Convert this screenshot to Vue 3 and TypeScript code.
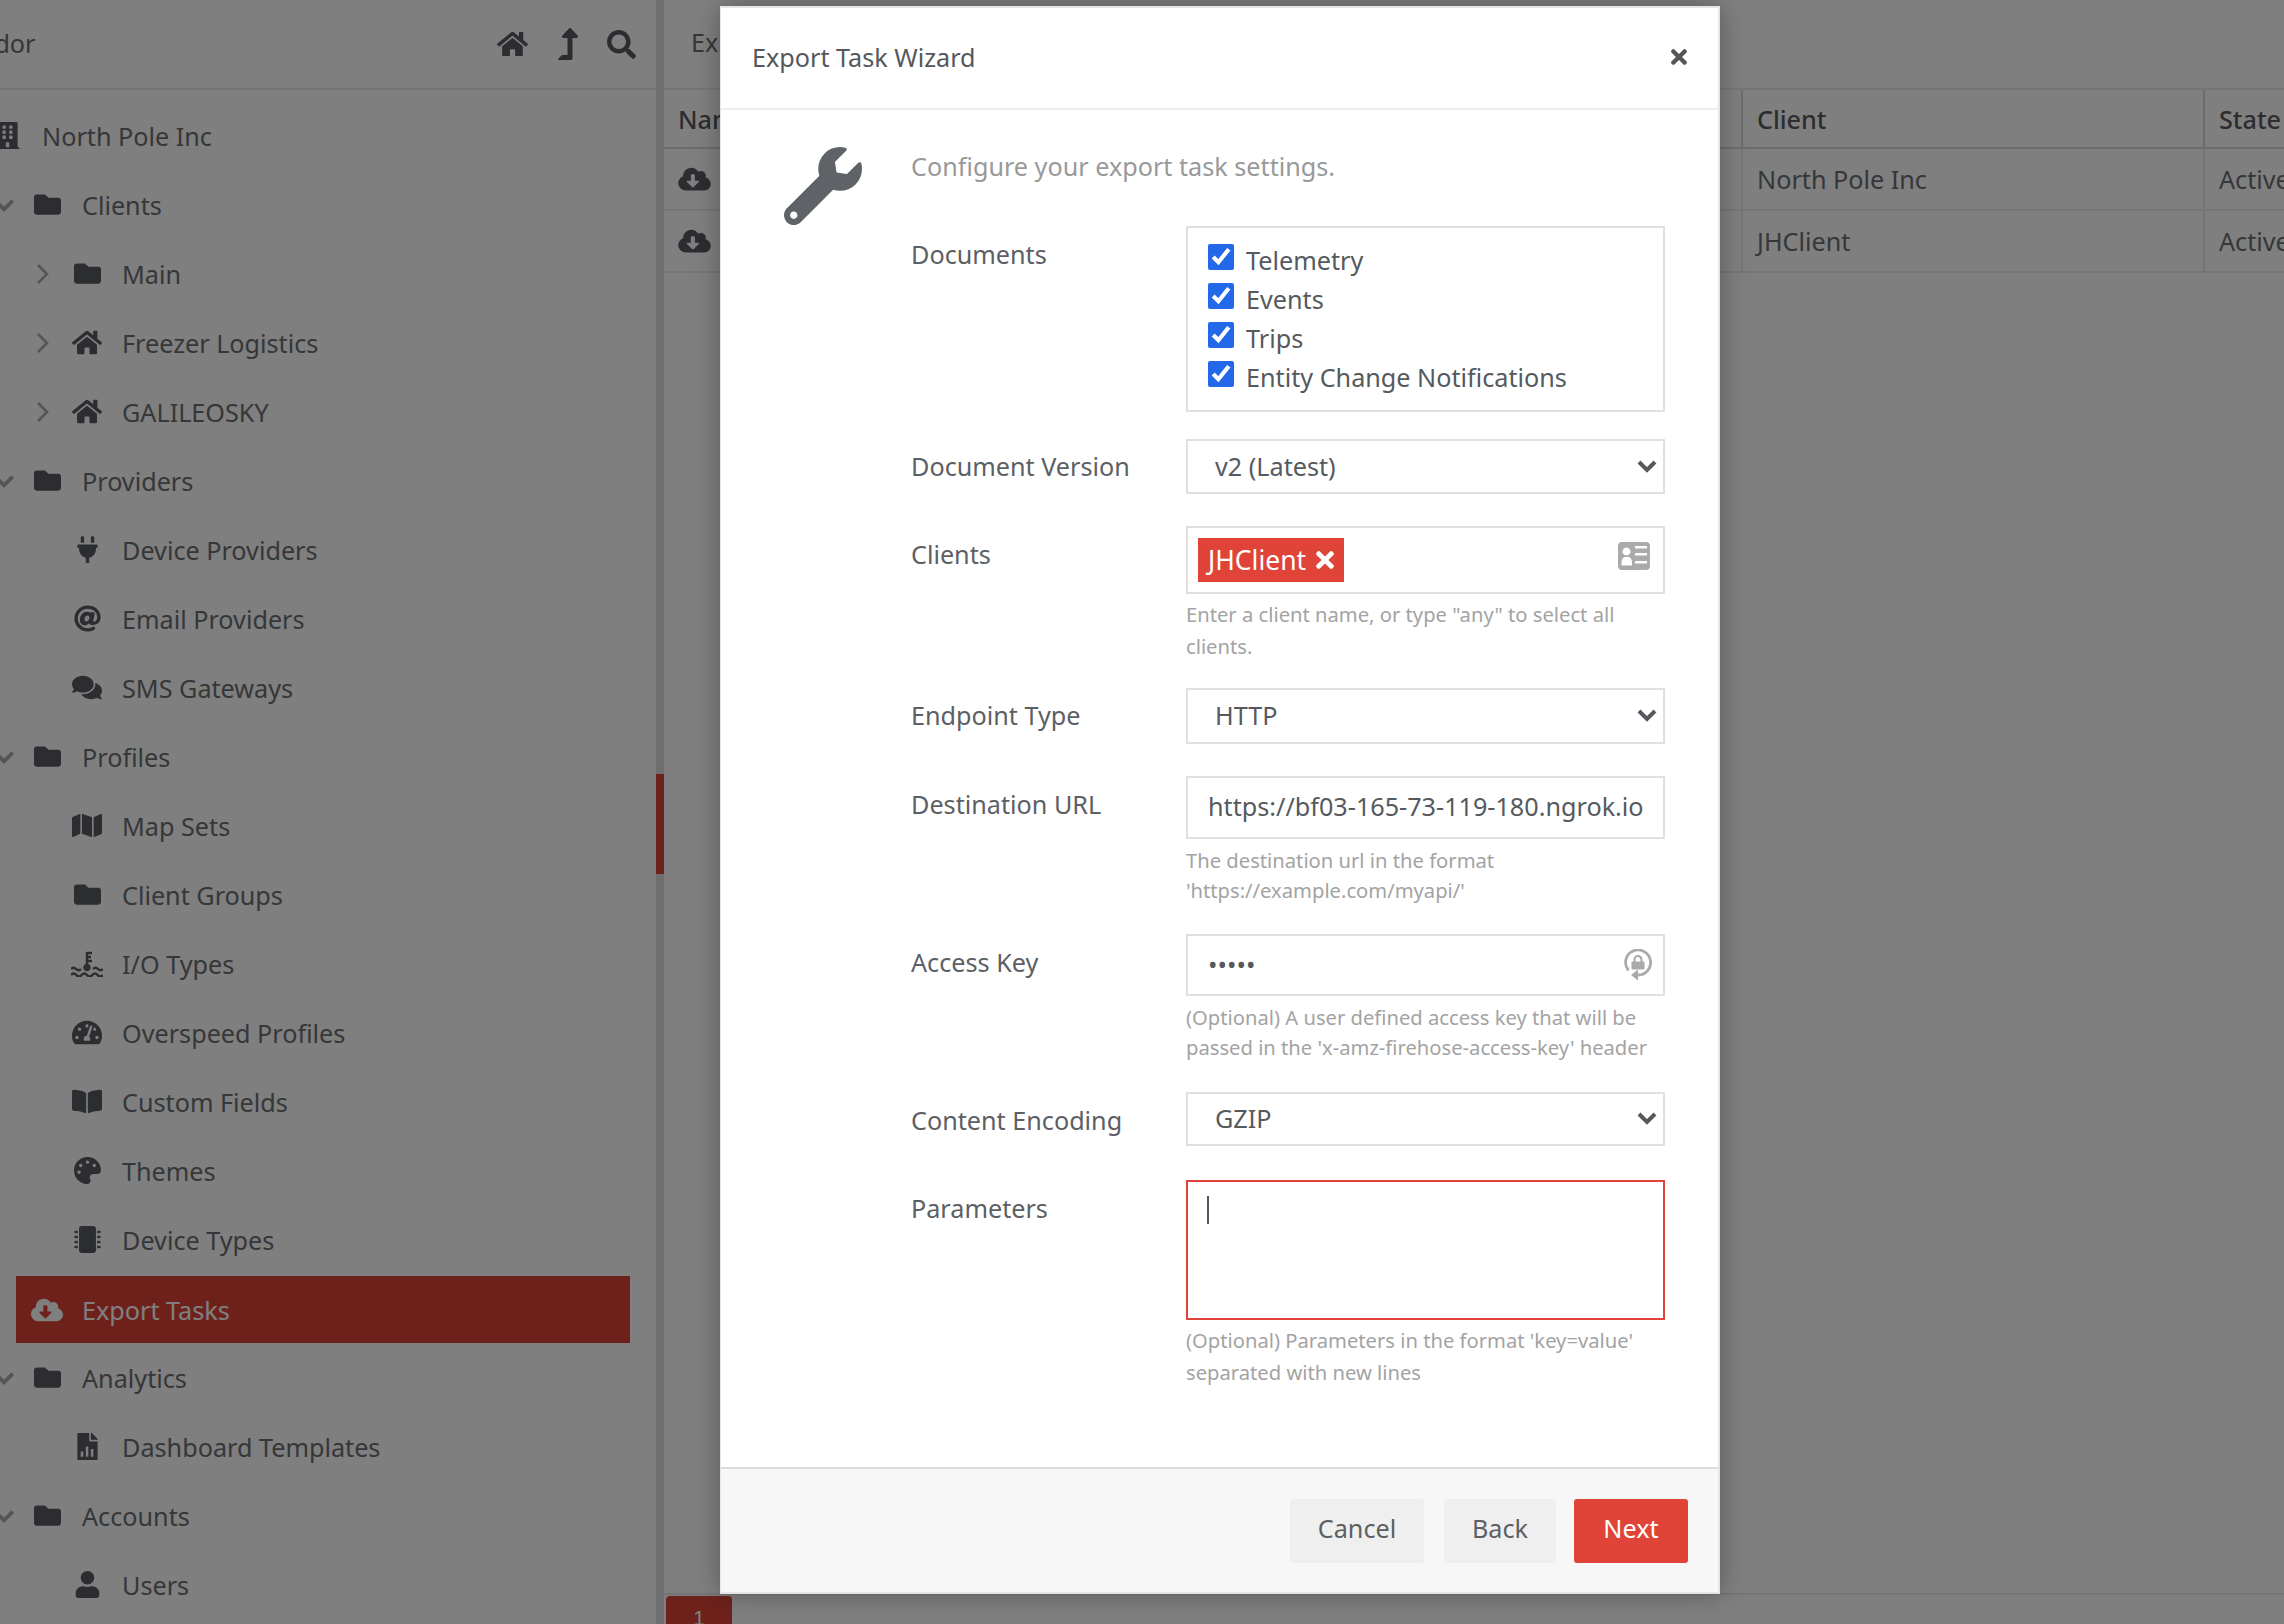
<script setup lang="ts">
interface Row { label: string; icon: string; lv: number; caret?: 'down' | 'right'; active?: boolean }

const P: Record<string, { vb: string; d: string }> = {
  home: { vb: '0 0 576 512', d: 'M280.37 148.26L96 300.11V464a16 16 0 0 0 16 16l112.06-.29a16 16 0 0 0 15.92-16V368a16 16 0 0 1 16-16h64a16 16 0 0 1 16 16v95.64a16 16 0 0 0 16 16.05L464 480a16 16 0 0 0 16-16V300L295.67 148.26a12.19 12.19 0 0 0-15.3 0zM571.6 251.47L488 182.56V44.05a12 12 0 0 0-12-12h-56a12 12 0 0 0-12 12v72.61L318.47 43a48 48 0 0 0-61 0L4.34 251.47a12 12 0 0 0-1.6 16.9l25.5 31A12 12 0 0 0 45.15 301l235.22-193.74a12.19 12.19 0 0 1 15.3 0L530.9 301a12 12 0 0 0 16.9-1.6l25.5-31a12 12 0 0 0-1.7-16.93z' },
  search: { vb: '0 0 512 512', d: 'M505 442.7L405.3 343c-4.5-4.5-10.6-7-17-7H372c27.6-35.3 44-79.7 44-128C416 93.1 322.9 0 208 0S0 93.1 0 208s93.1 208 208 208c48.3 0 92.7-16.4 128-44v16.3c0 6.4 2.5 12.5 7 17l99.7 99.7c9.4 9.4 24.6 9.4 33.9 0l28.3-28.3c9.4-9.4 9.4-24.6.1-34zM208 336c-70.7 0-128-57.2-128-128 0-70.7 57.2-128 128-128 70.7 0 128 57.2 128 128 0 70.7-57.2 128-128 128z' },
  up: { vb: '0 0 320 512', d: 'M313.553 119.669L209.587 7.666c-9.485-10.214-25.676-10.229-35.174 0L70.438 119.669C56.232 134.969 67.062 160 88.025 160H152v272H68.024a11.996 11.996 0 0 0-8.485 3.515l-56 56C-4.021 499.074 1.333 512 12.024 512H208c13.255 0 24-10.745 24-24V160h64c20.878 0 31.851-24.969 17.553-40.331z' },
  folder: { vb: '0 0 512 512', d: 'M464 128H272l-64-64H48C21.49 64 0 85.49 0 112v288c0 26.51 21.49 48 48 48h416c26.51 0 48-21.49 48-48V176c0-26.51-21.49-48-48-48z' },
  cloud: { vb: '0 0 640 512', d: 'M537.6 226.6c4.1-10.7 6.4-22.4 6.4-34.6 0-53-43-96-96-96-19.7 0-38.1 6-53.3 16.2C367 64.2 315.3 32 256 32c-88.4 0-160 71.6-160 160 0 2.7.1 5.4.2 8.1C40.2 219.8 0 273.2 0 336c0 79.5 64.5 144 144 144h368c70.7 0 128-57.3 128-128 0-61.9-44-113.6-102.4-125.4zm-132.9 88.7L299.3 420.7c-6.2 6.2-16.4 6.2-22.6 0L171.3 315.3c-10.1-10.1-2.9-27.3 11.3-27.3H248V176c0-8.8 7.2-16 16-16h48c8.8 0 16 7.2 16 16v112h65.4c14.2 0 21.4 17.2 11.3 27.3z' },
  building: { vb: '0 0 448 512', d: 'M436 480h-20V24c0-13.255-10.745-24-24-24H56C42.745 0 32 10.745 32 24v456H12c-6.627 0-12 5.373-12 12v20h448v-20c0-6.627-5.373-12-12-12zM128 76c0-6.627 5.373-12 12-12h40c6.627 0 12 5.373 12 12v40c0 6.627-5.373 12-12 12h-40c-6.627 0-12-5.373-12-12V76zm0 96c0-6.627 5.373-12 12-12h40c6.627 0 12 5.373 12 12v40c0 6.627-5.373 12-12 12h-40c-6.627 0-12-5.373-12-12v-40zm52 148h-40c-6.627 0-12-5.373-12-12v-40c0-6.627 5.373-12 12-12h40c6.627 0 12 5.373 12 12v40c0 6.627-5.373 12-12 12zm76 160h-64v-84c0-6.627 5.373-12 12-12h40c6.627 0 12 5.373 12 12v84zm64-172c0 6.627-5.373 12-12 12h-40c-6.627 0-12-5.373-12-12v-40c0-6.627 5.373-12 12-12h40c6.627 0 12 5.373 12 12v40zm0-96c0 6.627-5.373 12-12 12h-40c-6.627 0-12-5.373-12-12v-40c0-6.627 5.373-12 12-12h40c6.627 0 12 5.373 12 12v40zm0-96c0 6.627-5.373 12-12 12h-40c-6.627 0-12-5.373-12-12V76c0-6.627 5.373-12 12-12h40c6.627 0 12 5.373 12 12v40z' },
  plug: { vb: '0 0 384 512', d: 'M320,32a32,32,0,0,0-64,0v96h64Zm48,128H16A16,16,0,0,0,0,176v32a16,16,0,0,0,16,16H32v32A160.07,160.07,0,0,0,160,412.8V512h64V412.8A160.07,160.07,0,0,0,352,256V224h16a16,16,0,0,0,16-16V176A16,16,0,0,0,368,160ZM128,32a32,32,0,0,0-64,0v96h64Z' },
  at: { vb: '0 0 512 512', d: 'M256 8C118.941 8 8 118.919 8 256c0 137.059 110.919 248 248 248 48.154 0 95.342-14.14 135.408-40.223 12.005-7.815 14.625-24.288 5.552-35.372l-10.177-12.433c-7.671-9.371-21.179-11.667-31.373-5.129C325.92 429.757 291.314 440 256 440c-101.458 0-184-82.542-184-184S154.542 72 256 72c100.139 0 184 57.619 184 160 0 38.786-21.093 79.742-58.17 83.693-17.349-.454-16.91-12.857-13.476-30.024l23.433-121.11C394.653 149.75 383.308 136 368.225 136h-44.981a13.518 13.518 0 0 0-13.432 11.993l-.01.092c-14.697-17.901-40.448-21.775-59.971-21.775-74.58 0-137.831 62.234-137.831 151.46 0 65.303 36.785 105.87 96 105.87 26.984 0 57.369-15.637 74.991-38.333 9.522 34.104 40.613 34.103 70.71 34.103C462.609 379.41 504 307.798 504 232 504 95.653 394.023 8 256 8zm-21.68 304.43c-22.249 0-36.07-15.623-36.07-40.771 0-44.993 30.779-72.729 58.63-72.729 22.292 0 35.601 15.241 35.601 40.77 0 45.061-33.875 72.73-58.161 72.73z' },
  comments: { vb: '0 0 576 512', d: 'M416 192c0-88.4-93.1-160-208-160S0 103.6 0 192c0 34.3 14.1 65.9 38 92-13.4 30.2-35.5 54.2-35.8 54.5-2.2 2.3-2.8 5.7-1.5 8.7S4.8 352 8 352c36.6 0 66.9-12.3 88.7-25 32.2 15.7 70.3 25 111.3 25 114.9 0 208-71.6 208-160zm122 220c23.9-26 38-57.7 38-92 0-66.9-53.5-124.2-129.3-148.1.9 6.6 1.3 13.3 1.3 20.1 0 105.9-107.7 192-240 192-10.8 0-21.3-.8-31.7-1.9C207.8 439.6 281.8 480 368 480c41 0 79.1-9.2 111.3-25 21.8 12.7 52.1 25 88.7 25 3.2 0 6.1-1.9 7.3-4.8 1.3-2.9.7-6.3-1.5-8.7-.3-.3-22.4-24.2-35.8-54.5z' },
  map: { vb: '0 0 576 512', d: 'M0 117.66v346.32c0 11.32 11.43 19.06 21.94 14.86L160 416V32L20.12 87.95A32.006 32.006 0 0 0 0 117.66zM192 416l192 64V96L192 32v384zM554.06 33.16L416 96v384l139.88-55.95A31.996 31.996 0 0 0 576 394.34V48.02c0-11.32-11.43-19.06-21.94-14.86z' },
  io: { vb: '0 0 32 26', d: 'M16 1V13M16 2h5M16 6h4M16 10h5M16 14a2.5 2.5 0 1 0 .01 0M16 15.5a1 1 0 1 0 .01 0M0 18q2.5-2.5 5 0t5 0M22 18q2.5-2.5 5 0t5 0M0 24q2.67-3 5.33 0t5.33 0t5.33 0t5.33 0t5.33 0t5.33 0' },
  gauge: { vb: '0 0 576 512', d: 'M288 32C128.94 32 0 160.94 0 320c0 52.8 14.25 102.26 39.06 144.8 5.61 9.62 16.3 15.2 27.44 15.2h443c11.14 0 21.83-5.58 27.44-15.2C561.75 422.26 576 372.8 576 320c0-159.06-128.94-288-288-288zm0 64c14.71 0 26.58 10.13 30.32 23.65-1.11 2.26-2.64 4.23-3.45 6.67l-9.22 27.67c-5.13 3.49-10.97 6.01-17.64 6.01-17.67 0-32-14.33-32-32S270.33 96 288 96zM96 384c-17.67 0-32-14.33-32-32s14.33-32 32-32 32 14.33 32 32-14.33 32-32 32zm48-160c-17.67 0-32-14.33-32-32s14.33-32 32-32 32 14.33 32 32-14.33 32-32 32zm246.77-72.41l-61.33 184C343.13 347.33 352 364.54 352 384c0 11.72-3.38 22.55-8.88 32H232.88c-5.5-9.45-8.88-20.28-8.88-32 0-33.94 26.5-61.43 59.9-63.59l61.34-184.01c4.17-12.56 17.73-19.45 30.36-15.17 12.57 4.19 19.35 17.79 15.17 30.36zm14.66 57.2l15.52-46.55c3.47-1.29 7.13-2.23 11.05-2.23 17.67 0 32 14.33 32 32s-14.33 32-32 32c-11.38-.01-20.89-6.28-26.57-15.22zM480 384c-17.67 0-32-14.33-32-32s14.33-32 32-32 32 14.33 32 32-14.33 32-32 32z' },
  book: { vb: '0 0 576 512', d: 'M542.22 32.05c-54.8 3.11-163.72 14.43-230.96 55.59-4.64 2.84-7.27 7.89-7.27 13.17v363.87c0 11.55 12.63 18.85 23.28 13.49 69.18-34.82 169.23-44.32 218.7-46.92 16.89-.89 30.02-14.43 30.02-30.66V62.75c.01-17.71-15.35-31.74-33.77-30.7zM264.73 87.64C197.5 46.48 88.58 35.17 33.78 32.05 15.36 31.01 0 45.04 0 62.75V400.6c0 16.24 13.13 29.78 30.02 30.66 49.49 2.6 149.59 12.11 218.77 46.95 10.62 5.35 23.21-1.94 23.21-13.46V100.63c0-5.29-2.62-10.14-7.27-12.99z' },
  palette: { vb: '0 0 512 512', d: 'M204.3 5C104.9 24.4 24.8 104.3 5.2 203.4c-37 187 131.7 326.4 258.8 306.7 41.2-6.4 61.4-54.6 42.5-91.7-23.1-45.4 9.9-98.4 60.9-98.4h79.7c35.8 0 64.8-29.6 64.9-65.3C511.5 97.1 368.1-26.9 204.3 5zM96 320c-17.7 0-32-14.3-32-32s14.3-32 32-32 32 14.3 32 32-14.3 32-32 32zm32-128c-17.7 0-32-14.3-32-32s14.3-32 32-32 32 14.3 32 32-14.3 32-32 32zm128-64c-17.7 0-32-14.3-32-32s14.3-32 32-32 32 14.3 32 32-14.3 32-32 32zm128 64c-17.7 0-32-14.3-32-32s14.3-32 32-32 32 14.3 32 32-14.3 32-32 32z' },
  chip: { vb: '0 0 512 512', d: 'M416 48v416c0 26.51-21.49 48-48 48H144c-26.51 0-48-21.49-48-48V48c0-26.51 21.49-48 48-48h224c26.51 0 48 21.49 48 48zm96 58v12a6 6 0 0 1-6 6h-18v6a6 6 0 0 1-6 6h-42V88h42a6 6 0 0 1 6 6v6h18a6 6 0 0 1 6 6zm0 96v12a6 6 0 0 1-6 6h-18v6a6 6 0 0 1-6 6h-42v-48h42a6 6 0 0 1 6 6v6h18a6 6 0 0 1 6 6zm0 96v12a6 6 0 0 1-6 6h-18v6a6 6 0 0 1-6 6h-42v-48h42a6 6 0 0 1 6 6v6h18a6 6 0 0 1 6 6zm0 96v12a6 6 0 0 1-6 6h-18v6a6 6 0 0 1-6 6h-42v-48h42a6 6 0 0 1 6 6v6h18a6 6 0 0 1 6 6zM30 376h42v48H30a6 6 0 0 1-6-6v-6H6a6 6 0 0 1-6-6v-12a6 6 0 0 1 6-6h18v-6a6 6 0 0 1 6-6zm0-96h42v48H30a6 6 0 0 1-6-6v-6H6a6 6 0 0 1-6-6v-12a6 6 0 0 1 6-6h18v-6a6 6 0 0 1 6-6zm0-96h42v48H30a6 6 0 0 1-6-6v-6H6a6 6 0 0 1-6-6v-12a6 6 0 0 1 6-6h18v-6a6 6 0 0 1 6-6zm0-96h42v48H30a6 6 0 0 1-6-6v-6H6a6 6 0 0 1-6-6v-12a6 6 0 0 1 6-6h18v-6a6 6 0 0 1 6-6z' },
  filechart: { vb: '0 0 384 512', d: 'M224 136V0H24C10.7 0 0 10.7 0 24v464c0 13.3 10.7 24 24 24h336c13.3 0 24-10.7 24-24V160H248c-13.2 0-24-10.8-24-24zm160-14.1v6.1H256V0h6.1c6.4 0 12.5 2.5 17 7l97.9 98c4.5 4.5 7 10.6 7 16.9zM64 352h48v96H64zM160 256h48v192h-48zM256 304h48v144h-48z' },
  user: { vb: '0 0 448 512', d: 'M224 256c70.7 0 128-57.3 128-128S294.7 0 224 0 96 57.3 96 128s57.3 128 128 128zm89.6 32h-16.7c-22.2 10.2-46.9 16-72.9 16s-50.6-5.8-72.9-16h-16.7C60.2 288 0 348.2 0 422.4V464c0 26.5 21.5 48 48 48h352c26.5 0 48-21.5 48-48v-41.6c0-74.2-60.2-134.4-134.4-134.4z' },
  wrench: { vb: '0 0 512 512', d: 'M507.73 109.1c-2.24-9.03-13.54-12.09-20.12-5.51l-74.36 74.36-67.88-11.31-11.31-67.88 74.36-74.36c6.62-6.62 3.43-17.9-5.66-20.16-47.38-11.74-99.55.91-136.58 37.93-39.64 39.64-50.55 97.1-34.05 147.2L18.74 402.76c-24.99 24.99-24.99 65.51 0 90.5 24.99 24.99 65.51 24.99 90.5 0l213.21-213.21c50.12 16.71 107.47 5.68 147.37-34.22 37.07-37.07 49.7-89.32 37.91-136.73zM64 472c-13.25 0-24-10.75-24-24 0-13.26 10.75-24 24-24s24 10.74 24 24c0 13.25-10.75 24-24 24z' },
  times: { vb: '0 0 352 512', d: 'M242.72 256l100.07-100.07c12.28-12.28 12.28-32.19 0-44.48l-22.24-22.24c-12.28-12.28-32.19-12.28-44.48 0L176 189.28 75.93 89.21c-12.28-12.28-32.19-12.28-44.48 0L9.21 111.45c-12.28 12.28-12.28 32.19 0 44.48L109.28 256 9.21 356.07c-12.28 12.28-12.28 32.19 0 44.48l22.24 22.24c12.28 12.28 32.2 12.28 44.48 0L176 322.72l100.07 100.07c12.28 12.28 32.2 12.28 44.48 0l22.24-22.24c12.28-12.28 12.28-32.19 0-44.48L242.72 256z' },
  card: { vb: '0 0 32 28', d: 'M4 0H28a4 4 0 0 1 4 4V24a4 4 0 0 1-4 4H4a4 4 0 0 1-4-4V4a4 4 0 0 1 4-4zM8.5 5.5a4 4 0 1 0 .01 0zM3.5 23.5h10.5v-3.5c0-3-2-5-3.5-5h-3.5c-1.5 0-3.5 2-3.5 5zM17 4v2.6h12V4zM17 11v2.6h12V11zM17 19v2.6h12V19z' },
}

const rows: Row[] = [
  { label: 'North Pole Inc', icon: 'building', lv: 0 },
  { label: 'Clients', icon: 'folder', lv: 1, caret: 'down' },
  { label: 'Main', icon: 'folder', lv: 2, caret: 'right' },
  { label: 'Freezer Logistics', icon: 'home', lv: 2, caret: 'right' },
  { label: 'GALILEOSKY', icon: 'home', lv: 2, caret: 'right' },
  { label: 'Providers', icon: 'folder', lv: 1, caret: 'down' },
  { label: 'Device Providers', icon: 'plug', lv: 2 },
  { label: 'Email Providers', icon: 'at', lv: 2 },
  { label: 'SMS Gateways', icon: 'comments', lv: 2 },
  { label: 'Profiles', icon: 'folder', lv: 1, caret: 'down' },
  { label: 'Map Sets', icon: 'map', lv: 2 },
  { label: 'Client Groups', icon: 'folder', lv: 2 },
  { label: 'I/O Types', icon: 'io', lv: 2 },
  { label: 'Overspeed Profiles', icon: 'gauge', lv: 2 },
  { label: 'Custom Fields', icon: 'book', lv: 2 },
  { label: 'Themes', icon: 'palette', lv: 2 },
  { label: 'Device Types', icon: 'chip', lv: 2 },
  { label: 'Export Tasks', icon: 'cloud', lv: 1, active: true },
  { label: 'Analytics', icon: 'folder', lv: 1, caret: 'down' },
  { label: 'Dashboard Templates', icon: 'filechart', lv: 2 },
  { label: 'Accounts', icon: 'folder', lv: 1, caret: 'down' },
  { label: 'Users', icon: 'user', lv: 2 },
]

const docs = ['Telemetry', 'Events', 'Trips', 'Entity Change Notifications']
const tableRows = [
  { client: 'North Pole Inc', state: 'Active' },
  { client: 'JHClient', state: 'Active' },
]
</script>

<template>
  <div class="page">
    <aside class="side">
      <div class="side-main">
        <header class="side-head">
          <span class="side-title">Vendor</span>
          <svg class="hd-home" :viewBox="P.home.vb"><path :d="P.home.d" /></svg>
          <svg class="hd-up" :viewBox="P.up.vb"><path :d="P.up.d" /></svg>
          <svg class="hd-search" :viewBox="P.search.vb"><path :d="P.search.d" /></svg>
        </header>
        <nav class="tree">
          <div v-for="r in rows" :key="r.label" class="row" :class="['lv' + r.lv, { active: r.active }]">
            <span v-if="!r.active" class="caret">
              <svg v-if="r.caret === 'down'" class="c-down" viewBox="0 0 20 14"><path d="M2 3l8 8 8-8" /></svg>
              <svg v-if="r.caret === 'right'" class="c-right" viewBox="0 0 14 22"><path d="M3 2l9 9-9 9" /></svg>
            </span>
            <span class="ico">
              <svg :class="'i-' + r.icon" :viewBox="P[r.icon].vb"><path :d="P[r.icon].d" fill-rule="evenodd" /></svg>
            </span>
            <span class="lbl">{{ r.label }}</span>
          </div>
        </nav>
      </div>
      <div class="track"><div class="thumb"></div></div>
    </aside>

    <main class="main">
      <div class="main-head">Export Tasks</div>
      <div class="table">
        <div class="tr th">
          <div class="td">Name</div>
          <div class="td">Client</div>
          <div class="td">State</div>
        </div>
        <div v-for="t in tableRows" :key="t.client" class="tr">
          <div class="td"><svg class="cloud" :viewBox="P.cloud.vb"><path :d="P.cloud.d" /></svg></div>
          <div class="td">{{ t.client }}</div>
          <div class="td">{{ t.state }}</div>
        </div>
      </div>
      <div class="pager"><span class="page-btn">1</span></div>
    </main>

    <div class="overlay"></div>

    <section class="modal">
      <header class="m-head">
        <span class="m-title">Export Task Wizard</span>
        <svg class="m-close" :viewBox="P.times.vb"><path :d="P.times.d" /></svg>
      </header>
      <div class="m-body">
        <svg class="wrench" :viewBox="P.wrench.vb"><path :d="P.wrench.d" /></svg>
        <div class="form">
          <p class="desc">Configure your export task settings.</p>

          <div class="field f-docs">
            <label class="lab">Documents</label>
            <div class="ctl docs">
              <label v-for="d in docs" :key="d" class="chk">
                <input type="checkbox" checked />
                <span>{{ d }}</span>
              </label>
            </div>
          </div>

          <div class="field f-ver">
            <label class="lab lab-mid">Document Version</label>
            <div class="ctl sel-wrap h-ver">
              <select class="sel"><option>v2 (Latest)</option></select>
              <svg class="chev" viewBox="0 0 20 14"><path d="M2 3l8 8 8-8" /></svg>
            </div>
          </div>

          <div class="field f-cli">
            <label class="lab">Clients</label>
            <div class="col">
              <div class="ctl tags">
                <span class="tag">JHClient<svg class="tag-x" :viewBox="P.times.vb"><path :d="P.times.d" /></svg></span>
                <svg class="card" :viewBox="P.card.vb"><path :d="P.card.d" fill-rule="evenodd" /></svg>
              </div>
              <p class="help h32">Enter a client name, or type "any" to select all clients.</p>
            </div>
          </div>

          <div class="field f-end">
            <label class="lab lab-mid">Endpoint Type</label>
            <div class="ctl sel-wrap h-end">
              <select class="sel"><option>HTTP</option></select>
              <svg class="chev" viewBox="0 0 20 14"><path d="M2 3l8 8 8-8" /></svg>
            </div>
          </div>

          <div class="field f-dest">
            <label class="lab">Destination URL</label>
            <div class="col">
              <input class="ctl txt h-dest" type="text" value="https://bf03-165-73-119-180.ngrok.io/" />
              <p class="help h30">The destination url in the format<br />'https://example.com/myapi/'</p>
            </div>
          </div>

          <div class="field f-key">
            <label class="lab">Access Key</label>
            <div class="col">
              <div class="pw">
                <input class="ctl txt h-key" type="password" value="12345" />
                <svg class="lockrot" viewBox="0 0 28 33">
                  <path class="arc" d="M4.5 21.5A12.5 12.5 0 1 1 14 26" />
                  <path class="solid" d="M14 20.5v11L7 26z" />
                  <path class="solid" d="M8.5 12.5h11a1 1 0 0 1 1 1v6a1 1 0 0 1-1 1h-11a1 1 0 0 1-1-1v-6a1 1 0 0 1 1-1z" />
                  <path class="shack" d="M10.5 13v-2.5a3.5 3.5 0 0 1 7 0V13" />
                </svg>
              </div>
              <p class="help h30">(Optional) A user defined access key that will be<br />passed in the 'x-amz-firehose-access-key' header</p>
            </div>
          </div>

          <div class="field f-enc">
            <label class="lab">Content Encoding</label>
            <div class="ctl sel-wrap h-enc">
              <select class="sel"><option>GZIP</option></select>
              <svg class="chev" viewBox="0 0 20 14"><path d="M2 3l8 8 8-8" /></svg>
            </div>
          </div>

          <div class="field">
            <label class="lab">Parameters</label>
            <div class="col">
              <div class="ta-wrap">
                <textarea class="ctl ta"></textarea>
                <span class="cursor"></span>
              </div>
              <p class="help h32">(Optional) Parameters in the format 'key=value'<br />separated with new lines</p>
            </div>
          </div>
        </div>
      </div>
      <footer class="m-foot">
        <button class="btn b-cancel">Cancel</button>
        <button class="btn b-back">Back</button>
        <button class="btn b-next">Next</button>
      </footer>
    </section>
  </div>
</template>

<style>
html, body { margin: 0; padding: 0; }
</style>

<style scoped>
.page {
  position: relative;
  display: flex;
  width: 2284px;
  height: 1624px;
  overflow: hidden;
  background: #fff;
  font-family: "Noto Sans", "Open Sans", sans-serif;
  font-size: 25.2px;
  color: #6b6e72;
}
.side { display: flex; width: 664px; height: 100%; flex: none; }
.side-main { width: 656px; overflow: hidden; }
.side-head {
  display: flex;
  align-items: center;
  height: 88px;
  box-sizing: content-box;
  border-bottom: 2px solid #eaeaea;
  color: #6b6e72;
}
.side-title { margin-left: -50px; margin-right: auto; padding-bottom: 2px; }
.side-head svg { fill: #585a60; display: block; }
.hd-home { width: 31px; height: 28px; margin-right: 30px; }
.hd-up { width: 20px; height: 32px; margin-right: 29px; }
.hd-search { width: 29px; height: 29px; margin-right: 20px; }
.tree { margin-left: -39px; padding-top: 11px; }
.row {
  display: flex;
  align-items: center;
  height: 69px;
  box-sizing: border-box;
}
.lv1 { padding-left: 40px; }
.lv2 { padding-left: 80px; }
.caret { width: 28px; flex: none; display: flex; align-items: center; }
.c-down { width: 22px; height: 16px; margin-left: -8px; fill: none; stroke: #aaa; stroke-width: 3.4; flex: none; }
.c-right { width: 14px; height: 22px; margin-left: -6px; fill: none; stroke: #aaa; stroke-width: 2.6; flex: none; }
.ico { width: 36px; flex: none; display: flex; justify-content: center; align-items: center; }
.ico svg { fill: #585a60; display: block; width: 27px; height: 27px; }
.ico .i-home, .ico .i-comments, .ico .i-map, .ico .i-gauge, .ico .i-book { width: 30px; height: 27px; }
.ico .i-io { width: 32px; height: 26px; }
.ico .i-io path { fill: none; stroke: #585a60; stroke-width: 2.4; }
.ico .i-cloud { width: 32px; height: 26px; }
.lbl { margin-left: 17px; white-space: nowrap; }
.row.active {
  height: 67px;
  margin: 2px 26px 0 55px;
  padding-left: 13px;
  background: #dc4236;
  color: #fff;
}
.row.active .ico svg { fill: #fff; }
.track { position: relative; width: 8px; background: #dedede; }
.thumb { position: absolute; top: 774px; left: 0; width: 8px; height: 100px; background: #dc4236; }

.main { flex: 1; display: flex; flex-direction: column; min-width: 0; }
.main-head { height: 88px; line-height: 84px; padding-left: 27px; white-space: nowrap; }
.table { border-top: 2px solid #eaeaea; }
.tr {
  display: grid;
  grid-template-columns: 1077px 462px 1fr;
  height: 62px;
  border-bottom: 2px solid #eaeaea;
  box-sizing: border-box;
}
.tr.th { height: 59px; border-bottom: 2px solid #d8d8d8; font-weight: 500; color: #585a60; }
.td { display: flex; align-items: center; padding-left: 14px; border-left: 2px solid #eaeaea; white-space: nowrap; }
.td:first-child { border-left: 0; }
.th .td { border-left-color: #d8d8d8; }
.cloud { width: 33px; height: 26px; fill: #585a60; }
.pager { margin-top: auto; height: 29px; border-top: 2px solid #eaeaea; }
.page-btn {
  display: block;
  width: 66px;
  height: 40px;
  margin-left: 2px;
  margin-top: 1px;
  box-sizing: border-box;
  padding-top: 10px;
  text-align: center;
  background: #dc4236;
  color: #fff;
  border-radius: 4px 4px 0 0;
  font: 21px "Liberation Sans", sans-serif;
}

.overlay { position: absolute; inset: 0; background: rgba(0, 0, 0, 0.5); }

.modal {
  position: absolute;
  left: 720px;
  top: 6px;
  width: 1000px;
  height: 1588px;
  box-sizing: border-box;
  display: flex;
  flex-direction: column;
  background: #fff;
  border: 2px solid #e6e6e6;
  border-left-width: 1px;
  box-shadow: 0 0 24px rgba(0, 0, 0, 0.3);
  color: #5c6064;
}
.m-head {
  flex: none;
  height: 102px;
  box-sizing: border-box;
  display: flex;
  align-items: center;
  justify-content: space-between;
  padding: 0 31px 3px 31px;
  border-bottom: 2px solid #eee;
}
.m-title { color: #54585c; }
.m-close { width: 16px; height: 24px; fill: #555; }
.m-body { flex: 1; display: flex; min-height: 0; }
.wrench { width: 78px; height: 78px; margin: 37px 0 0 63px; fill: #5f6368; flex: none; }
.form { margin-left: 49px; width: 754px; }
.desc { margin: 37px 0 41px; line-height: 38px; color: #999; }
.field { display: flex; align-items: flex-start; margin-bottom: 28px; }
.lab { width: 275px; flex: none; padding-top: 9px; line-height: 38px; }
.lab-mid { padding-top: 8px; }
.col { width: 479px; display: flex; flex-direction: column; }
.ctl {
  display: block;
  width: 479px;
  box-sizing: border-box;
  border: 2px solid #e0e0e0;
  background: #fff;
  font: inherit;
  color: #555a5e;
  outline: none;
  margin: 0;
}
.f-docs { margin-bottom: 27px; }
.f-ver { margin-bottom: 32px; }
.f-cli { margin-bottom: 26px; }
.f-end { margin-bottom: 32px; }
.f-dest { margin-bottom: 29px; }
.f-key { margin-bottom: 30px; }
.f-enc { margin-bottom: 34px; }
.docs { height: 186px; padding: 13px 20px; display: flex; flex-direction: column; }
.chk { display: flex; align-items: flex-start; height: 39px; line-height: 38px; }
.chk input { width: 26px; height: 26px; margin: 3px 12px 0 0; accent-color: #2268e8; flex: none; }
.sel-wrap { position: relative; }
.h-ver { height: 55px; }
.h-end { height: 56px; }
.h-enc { height: 54px; }
.sel {
  appearance: none;
  width: 100%;
  height: 100%;
  border: 0;
  background: transparent;
  font: inherit;
  color: inherit;
  padding: 0 0 2px 27px;
  outline: none;
  display: block;
}
.chev {
  position: absolute;
  right: 6px;
  top: 50%;
  width: 20px;
  height: 14px;
  margin-top: -8px;
  fill: none;
  stroke: #55585c;
  stroke-width: 4;
}
.tags { position: relative; height: 68px; padding: 10px; }
.tag {
  display: flex;
  align-items: center;
  height: 44px;
  width: 146px;
  box-sizing: border-box;
  padding-left: 10px;
  background: #e04337;
  color: #fff;
  white-space: nowrap;
  font-size: 26.5px;
}
.tag-x { width: 18px; height: 26px; margin-left: auto; margin-right: 10px; fill: #fff; flex: none; }
.card { position: absolute; right: 13px; top: 14px; width: 32px; height: 28px; fill: #aaa; }
.help { margin: 4px 0 0; font-size: 20.2px; color: #a3a3a3; }
.h32 { line-height: 32px; }
.h30 { line-height: 30px; margin-top: 6px; }
.txt { padding: 0 20px 3px; }
.h-dest { height: 63px; }
.h-key { height: 62px; }
.pw { position: relative; }
.lockrot { position: absolute; right: 13px; top: 15px; width: 28px; height: 33px; }
.lockrot .arc { fill: none; stroke: #aaa; stroke-width: 2.8; }
.lockrot .solid { fill: #aaa; }
.lockrot .shack { fill: none; stroke: #aaa; stroke-width: 2; }
.ta-wrap { position: relative; }
.ta { height: 140px; border-color: #e04337; padding: 12px 20px; resize: none; }
.cursor { position: absolute; left: 21px; top: 16px; width: 2px; height: 28px; background: #555; }
.m-foot {
  flex: none;
  height: 125px;
  box-sizing: border-box;
  display: flex;
  justify-content: flex-end;
  align-items: flex-start;
  padding: 30px 30px 0 0;
  background: #f7f7f7;
  border-top: 2px solid #ddd;
}
.btn {
  height: 64px;
  border: 0;
  border-radius: 3px;
  font: inherit;
  background: #efefef;
  color: #5c6064;
  padding: 0 0 6px;
}
.b-cancel { width: 134px; margin-right: 20px; }
.b-back { width: 112px; margin-right: 18px; }
.b-next { width: 114px; background: #e04337; color: #fff; }
</style>
